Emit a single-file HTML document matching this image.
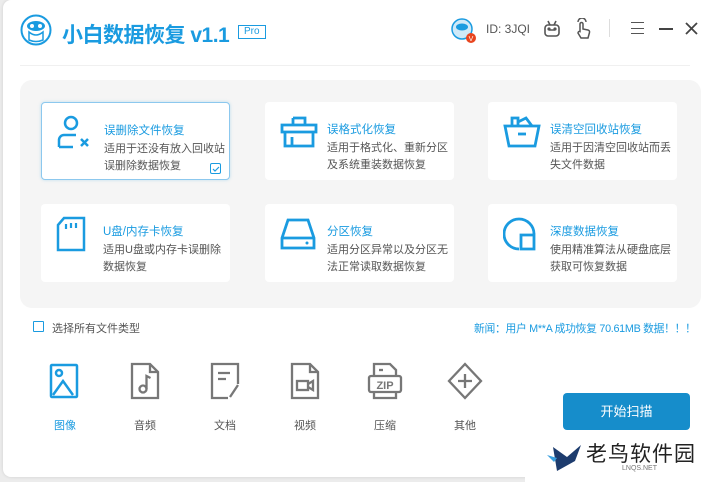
<!DOCTYPE html>
<html><head><meta charset="utf-8"><style>
*{margin:0;padding:0;box-sizing:border-box}
body{width:721px;height:482px;background:#ececec;position:relative;overflow:hidden;font-family:"Liberation Sans","Noto Sans CJK SC",sans-serif}
.win{position:absolute;left:3px;top:0;width:730px;height:477px;background:#fff;border-radius:8px;box-shadow:0 0 3px rgba(0,0,0,.12)}
.abs{position:absolute}
.title{left:62px;top:19px;font-size:21px;font-weight:bold;color:#1a9be0;white-space:nowrap;letter-spacing:-0.5px}
.pro{left:238px;top:25px;border:1px solid #1a9be0;color:#1a9be0;font-size:10px;padding:0 5px;line-height:12px}
.hline{left:20px;top:65px;width:670px;height:1px;background:#f0f0f0}
.panel{left:20px;top:80px;width:681px;height:228px;background:#f5f5f5;border-radius:12px}
.card{position:absolute;width:189px;height:78px;background:#fff;border-radius:4px}
.card.sel{border:1px solid #8cc8ee;box-shadow:0 0 3px rgba(26,155,224,.25)}
.card svg{position:absolute;left:15px;top:12px}
.card .t{position:absolute;left:62px;top:19px;font-size:11.5px;color:#1a9be0}
.card .d{position:absolute;left:62px;top:38px;font-size:11px;color:#555;line-height:17px;width:125px}
.ft{position:absolute;top:362px;width:40px;text-align:center}
.ft .l{position:absolute;top:55px;left:0;width:40px;text-align:center;font-size:11px;color:#555}
</style></head><body>
<div class="win"></div>
<svg class="abs" style="left:20px;top:14px" width="32" height="32" viewBox="0 0 32 32"><circle cx="16" cy="16" r="14.5" fill="#fff" stroke="#1a9be0" stroke-width="2"/><ellipse cx="16" cy="12" rx="9" ry="5" fill="#1a9be0"/><circle cx="12" cy="12" r="2" fill="#fff"/><circle cx="20" cy="12" r="2" fill="#fff"/><path d="M9 18 Q16 24 23 18 L23 26 Q16 29 9 26Z" fill="none" stroke="#1a9be0" stroke-width="1.5"/></svg>
<div class="abs title">小白数据恢复 v1.1</div>
<div class="abs pro">Pro</div>
<svg class="abs" style="left:451px;top:18px" width="26" height="26" viewBox="0 0 26 26"><circle cx="11" cy="11" r="10" fill="#cfe9f8" stroke="#1a9be0" stroke-width="1.5"/><ellipse cx="11" cy="9" rx="6" ry="3.5" fill="#1a9be0"/><circle cx="20" cy="20" r="5" fill="#e8451f"/><text x="20" y="23" font-size="7" fill="#fff" text-anchor="middle" font-family="Liberation Sans">V</text></svg>
<div class="abs" style="left:486px;top:22px;font-size:12px;color:#555">ID: 3JQI</div>
<svg class="abs" style="left:542px;top:19px" width="20" height="20" viewBox="0 0 20 20" fill="none" stroke="#555" stroke-width="1.6"><rect x="3" y="6" width="14" height="11" rx="3"/><path d="M6 2l2 4M14 2l-2 4M7 11h6"/><circle cx="7" cy="10" r=".8" fill="#555"/><circle cx="13" cy="10" r=".8" fill="#555"/></svg>
<svg class="abs" style="left:574px;top:18px" width="20" height="22" viewBox="0 0 20 22" fill="none" stroke="#555" stroke-width="1.5"><path d="M6 13V6a1.5 1.5 0 013 0v5l5 1a2 2 0 011.5 2.5L14 20H7l-3-5a1.5 1.5 0 012-1.5z"/><path d="M4 4a4 4 0 018 0"/></svg>
<div class="abs" style="left:609px;top:19px;width:1px;height:18px;background:#ddd"></div>
<div class="abs" style="left:631px;top:22px;width:13px;height:12px;border-top:1.5px solid #555;border-bottom:1.5px solid #555"></div>
<div class="abs" style="left:631px;top:27.5px;width:13px;height:1.5px;background:#555"></div>
<div class="abs" style="left:659px;top:28px;width:14px;height:1.8px;background:#444"></div>
<svg class="abs" style="left:685px;top:22px" width="13" height="13" viewBox="0 0 13 13" stroke="#444" stroke-width="1.8"><path d="M1 1L12 12M12 1L1 12"/></svg>
<div class="abs hline"></div>
<div class="abs panel"></div>

<div class="card sel" style="left:41px;top:102px">
<svg width="40" height="36" viewBox="0 0 40 36" fill="none" stroke="#1a9be0" stroke-width="2.5"><circle cx="14" cy="8" r="6"/><path d="M2 32v-7a5 5 0 015-5h12"/><path d="M2 32h14"/><path d="M24 24l7 7M31 24l-7 7"/></svg>
<div class="t">误删除文件恢复</div><div class="d">适用于还没有放入回收站误删除数据恢复</div>
<div style="position:absolute;left:168px;top:60px;width:11px;height:11px;border:1px solid #1a9be0;border-radius:2px"></div>
<svg style="position:absolute;left:169px;top:61px" width="10" height="10" viewBox="0 0 10 10" fill="none" stroke="#1a9be0" stroke-width="1.2"><path d="M2 5l2 2 4-4"/></svg>
</div>
<div class="card" style="left:265px;top:102px">
<svg width="40" height="36" viewBox="0 0 40 36" fill="none" stroke="#1a9be0" stroke-width="2.8"><path d="M13 4h12v7"/><path d="M13 4v7"/><path d="M2 11h34v7H2z"/><path d="M5 18v14h28V18"/><path d="M12 32v-9"/></svg>
<div class="t">误格式化恢复</div><div class="d">适用于格式化、重新分区及系统重装数据恢复</div></div>
<div class="card" style="left:488px;top:102px">
<svg width="40" height="36" viewBox="0 0 40 36" fill="none" stroke="#1a9be0" stroke-width="2.8"><path d="M2 12h34l-4 20H6z"/><path d="M9 12V4h6v8M15 8l8-4 6 8"/><path d="M15 20h8"/></svg>
<div class="t">误清空回收站恢复</div><div class="d">适用于因清空回收站而丢失文件数据</div></div>
<div class="card" style="left:41px;top:204px">
<svg width="40" height="36" viewBox="0 0 40 36" fill="none" stroke="#1a9be0" stroke-width="2.5"><path d="M8 2h20v32H2V9z"/><path d="M10 8v5M15 7v5M20 7v5" stroke-width="2.2"/></svg>
<div class="t">U盘/内存卡恢复</div><div class="d">适用U盘或内存卡误删除数据恢复</div></div>
<div class="card" style="left:265px;top:204px">
<svg width="40" height="36" viewBox="0 0 40 36" fill="none" stroke="#1a9be0" stroke-width="2.8"><path d="M8 4h20l6 18v10H2V22z"/><path d="M2 22h32"/><circle cx="27" cy="27" r="1.5" fill="#1a9be0" stroke="none"/></svg>
<div class="t">分区恢复</div><div class="d">适用分区异常以及分区无法正常读取数据恢复</div></div>
<div class="card" style="left:488px;top:204px">
<svg width="40" height="36" viewBox="0 0 40 36" fill="none" stroke="#1a9be0" stroke-width="2.8"><path d="M16 33A15 15 0 1131 18"/><path d="M18 19h13v14H18z"/></svg>
<div class="t">深度数据恢复</div><div class="d">使用精准算法从硬盘底层获取可恢复数据</div></div>

<div class="abs" style="left:33px;top:321px;width:11px;height:11px;border:1.3px solid #1a9be0;border-radius:1px"></div>
<div class="abs" style="left:52px;top:320px;font-size:11px;color:#555">选择所有文件类型</div>
<div class="abs" style="left:474px;top:320px;font-size:10.8px;letter-spacing:-0.3px;color:#1a9be0;white-space:nowrap">新闻：用户 M**A 成功恢复 70.61MB 数据！！！</div>

<div class="ft" style="left:45px"><svg width="40" height="38" viewBox="0 0 40 38" fill="none" stroke="#1a9be0" stroke-width="2.5"><rect x="6" y="3" width="26" height="32" rx="1"/><circle cx="14" cy="11" r="3"/><path d="M8 33l10-14 10 14"/></svg><div class="l" style="color:#1a9be0">图像</div></div>
<div class="ft" style="left:125px"><svg width="40" height="38" viewBox="0 0 40 38" fill="none" stroke="#777" stroke-width="2.3"><path d="M7 2h18l8 8v26H7z"/><path d="M25 2v8h8"/><circle cx="18" cy="27" r="3.5"/><path d="M21.5 27V14l4 2"/></svg><div class="l">音频</div></div>
<div class="ft" style="left:205px"><svg width="40" height="38" viewBox="0 0 40 38" fill="none" stroke="#777" stroke-width="2.3"><path d="M33 22V2H7v34h16"/><path d="M13 11h12M13 17h8M25 35l8-12"/></svg><div class="l">文档</div></div>
<div class="ft" style="left:285px"><svg width="40" height="38" viewBox="0 0 40 38" fill="none" stroke="#777" stroke-width="2.3"><path d="M7 2h18l8 8v26H7z"/><path d="M25 2v8h8"/><rect x="12" y="19" width="11" height="9"/><path d="M23 22l5-3v9l-5-3"/></svg><div class="l">视频</div></div>
<div class="ft" style="left:365px"><svg width="40" height="38" viewBox="0 0 40 38" fill="none" stroke="#777" stroke-width="2.3"><path d="M9 14V2h16l6 6v6M9 30v6h22v-6"/><rect x="4" y="14" width="32" height="16" rx="2"/><text x="20" y="27" font-size="11" font-weight="bold" fill="#777" stroke="none" text-anchor="middle" font-family="Liberation Sans">ZIP</text><path d="M14 8h4"/></svg><div class="l">压缩</div></div>
<div class="ft" style="left:445px"><svg width="40" height="38" viewBox="0 0 40 38" fill="none" stroke="#777" stroke-width="2.3"><path d="M20 2l16 17-16 17L4 19z"/><path d="M20 12v14M13 19h14"/></svg><div class="l">其他</div></div>

<div class="abs" style="left:563px;top:393px;width:127px;height:37px;background:#168dcb;border-radius:4px;color:#fff;font-size:13px;text-align:center;line-height:37px">开始扫描</div>
<div class="abs" style="left:525px;top:431px;width:196px;height:51px;background:#fff"></div>
<svg class="abs" style="left:545px;top:441px" width="40" height="32" viewBox="0 0 40 32"><path d="M8 6l14 10 14-12-6 16-18 10z" fill="#1d3c6e"/><path d="M2 14l10 3-3 4z" fill="#3aa0e0"/></svg>
<div class="abs" style="left:586px;top:438px;font-size:21px;color:#222;letter-spacing:1px">老鸟软件园</div>
<div class="abs" style="left:622px;top:465px;font-size:7px;color:#777">LNQS.NET</div>
</body></html>
